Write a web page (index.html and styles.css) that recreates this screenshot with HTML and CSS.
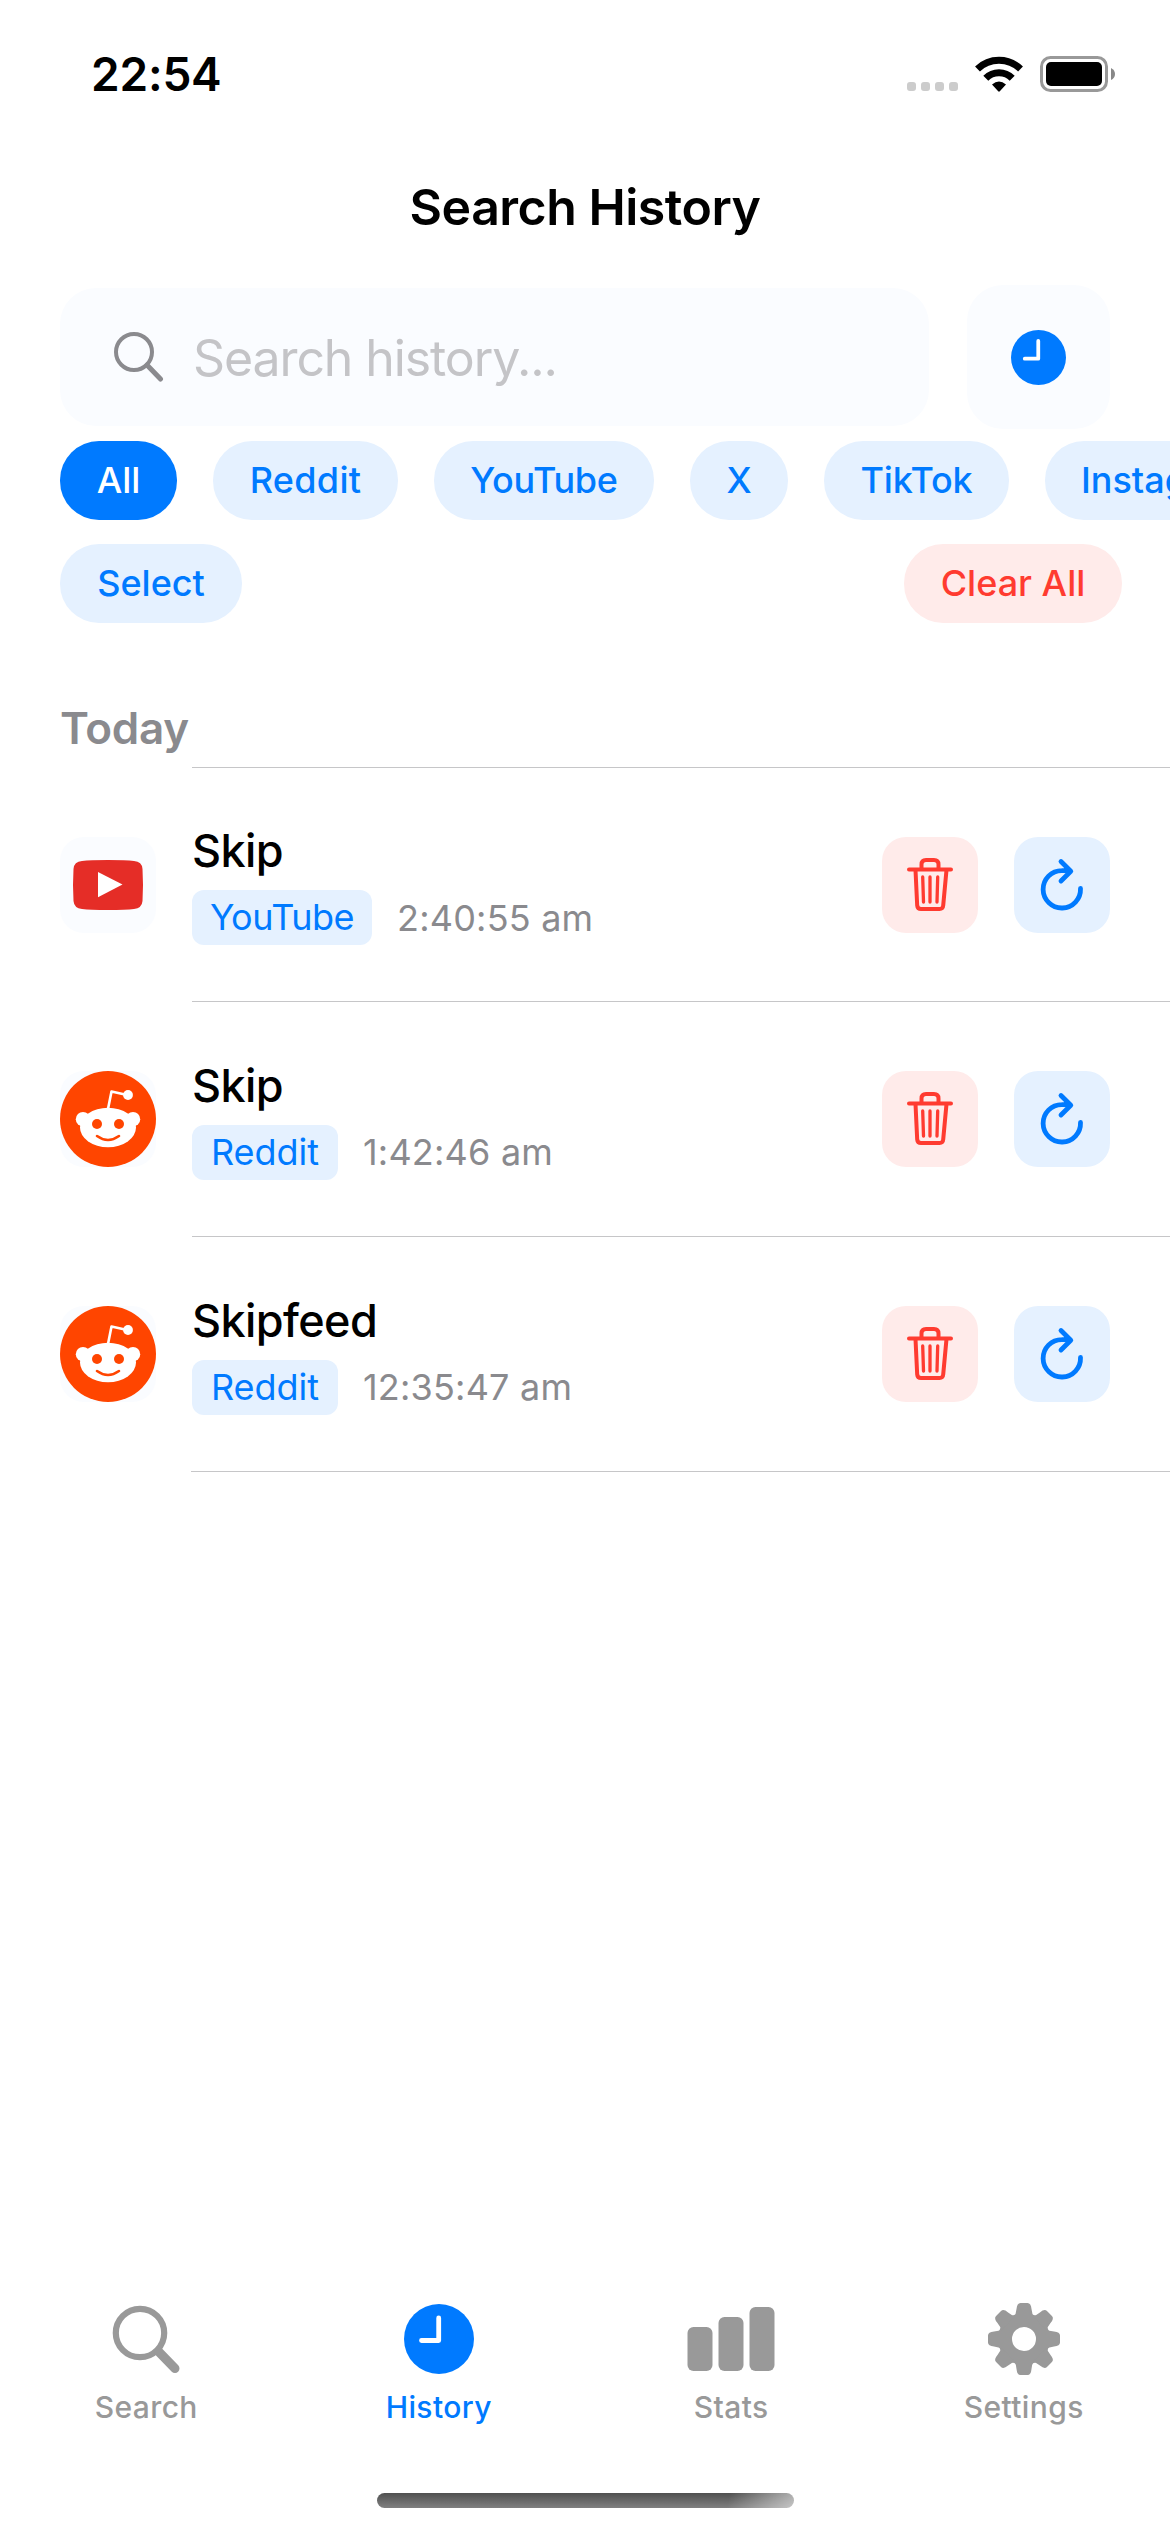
FILE: index.html
```html
<!DOCTYPE html>
<html lang="en">
<head>
<meta charset="utf-8">
<title>Search History</title>
<link rel="stylesheet" href="styles.css">
</head>
<body>
<svg class="defs" aria-hidden="true">
  <symbol id="trash" viewBox="0 0 96 96">
    <g fill="none" stroke="currentColor" stroke-linecap="round" stroke-linejoin="round">
      <path stroke-width="4" d="M27 32.400H69M39.500 32V27.500Q39.500 23 44 23H52Q56.500 23 56.500 27.500V32M33.500 33L35.200 68.500Q35.500 72 39 72H57.500Q61 72 61.200 68.500L64.500 33"/>
      <path stroke-width="3.300" d="M40.700 40L41.500 65M48 40V65M55.700 40L55 65"/>
    </g>
  </symbol>
  <symbol id="again" viewBox="0 0 96 96">
    <path fill="none" stroke="currentColor" stroke-width="4.800" stroke-linecap="round" stroke-linejoin="round" d="M66.500 51.500A18.700 18.700 0 1 1 47.800 33.600Q52 33.300 56.500 34.300M47 24.500L56.800 34.300L47 44"/>
  </symbol>
  <symbol id="clock" viewBox="0 0 70 70">
    <circle cx="35" cy="35" r="35" fill="currentColor"/>
    <path d="M34.700 14V36.500H17.500" fill="none" stroke="#fff" stroke-width="4.800" stroke-linecap="round" stroke-linejoin="round"/>
  </symbol>
  <symbol id="reddit" viewBox="0 0 96 96">
    <circle cx="48" cy="48" r="48" fill="#ff4500"/>
    <g fill="#fff">
      <ellipse cx="48" cy="56.500" rx="28" ry="19.700"/>
      <circle cx="23" cy="48.200" r="7.200"/><circle cx="73" cy="48.200" r="7.200"/>
      <circle cx="68" cy="24" r="4.900"/>
    </g>
    <path d="M48 38L51.500 20.500L66 23.700" fill="none" stroke="#fff" stroke-width="2.600" stroke-linejoin="round"/>
    <circle cx="37" cy="53" r="5" fill="#ff4500"/><circle cx="59" cy="53" r="5" fill="#ff4500"/>
    <path d="M37 65Q48 73 59 65" fill="none" stroke="#ff4500" stroke-width="2.600" stroke-linecap="round"/>
  </symbol>
</svg>

<div class="status">
  <span class="time">22:54</span>
  <span class="signals">
    <svg class="dots" viewBox="0 0 51 9" fill="#ccc"><rect width="9" height="9" rx="3"/><rect x="14" width="9" height="9" rx="3"/><rect x="28" width="9" height="9" rx="3"/><rect x="42" width="9" height="9" rx="3"/></svg>
    <svg class="wifi" viewBox="0 0 48 36"><g fill="none" stroke="#000"><path stroke-width="7" d="M2.500 12.900A31 31 0 0 1 45.500 12.900"/><path stroke-width="7" d="M10.800 22.300A18.500 18.500 0 0 1 37.200 22.300"/></g><path d="M17 28.500Q24 22.500 31 28.500L24.800 35.300Q24 36.200 23.200 35.300Z"/></svg>
    <svg class="battery" viewBox="0 0 76 36"><rect x="1.500" y="1.500" width="65" height="33" rx="9" fill="none" stroke="#999" stroke-width="3"/><rect x="6" y="6" width="56" height="24" rx="5"/><path d="M71 12Q75 14 75 18T71 24Z" fill="#888"/></svg>
  </span>
</div>

<h1 class="title">Search History</h1>

<div class="search-row">
  <div class="search-box">
    <svg class="lens" viewBox="0 0 50 50" fill="none" stroke="currentColor" stroke-linecap="round"><circle cx="20" cy="20" r="18" stroke-width="4"/><path d="M33 33L46.500 47" stroke-width="5"/></svg>
    <span>Search history...</span>
  </div>
  <div class="recent"><svg viewBox="0 0 70 70"><use href="#clock"/></svg></div>
</div>

<div class="chips">
  <span class="chip all active">All</span><span class="chip reddit">Reddit</span><span class="chip youtube">YouTube</span><span class="chip x">X</span><span class="chip tiktok">TikTok</span><span class="chip instagram">Instagram</span>
</div>
<div class="actions"><span class="chip select">Select</span><span class="chip clear">Clear All</span></div>

<h2 class="day"><span>Today</span></h2>

<div class="list">
  <div class="item">
    <div class="logo"><svg viewBox="0 0 96 96"><path d="M22 24Q30 23 48 23T74 24Q82 24.500 82.500 32Q83.500 48 82.500 64Q82 71 74 72Q66 73 48 73T22 72Q14 71 13.500 64Q12.500 48 13.500 32Q14 24.500 22 24Z" fill="#e52d27"/><path d="M38 35L62.500 47.500L38 60.300Z" fill="#fff"/></svg></div>
    <div class="body"><div class="name"><span>Skip</span></div><div class="meta"><span class="tag youtube">YouTube</span><span class="when">2:40:55 am</span></div></div>
    <div class="btn del"><svg viewBox="0 0 96 96"><use href="#trash"/></svg></div><div class="btn redo"><svg viewBox="0 0 96 96"><use href="#again"/></svg></div>
  </div>
  <div class="item">
    <div class="logo"><svg viewBox="0 0 96 96"><use href="#reddit"/></svg></div>
    <div class="body"><div class="name"><span>Skip</span></div><div class="meta"><span class="tag reddit">Reddit</span><span class="when">1:42:46 am</span></div></div>
    <div class="btn del"><svg viewBox="0 0 96 96"><use href="#trash"/></svg></div><div class="btn redo"><svg viewBox="0 0 96 96"><use href="#again"/></svg></div>
  </div>
  <div class="item">
    <div class="logo"><svg viewBox="0 0 96 96"><use href="#reddit"/></svg></div>
    <div class="body"><div class="name"><span>Skipfeed</span></div><div class="meta"><span class="tag reddit">Reddit</span><span class="when">12:35:47 am</span></div></div>
    <div class="btn del"><svg viewBox="0 0 96 96"><use href="#trash"/></svg></div><div class="btn redo"><svg viewBox="0 0 96 96"><use href="#again"/></svg></div>
  </div>
</div>

<nav class="tabs">
  <div class="tab"><svg viewBox="0 0 90 76" fill="none" stroke="currentColor" stroke-linecap="round"><circle cx="39" cy="32" r="24.200" stroke-width="6.200"/><path d="M58 51L74 67.500" stroke-width="9"/></svg><span>Search</span></div>
  <div class="tab on"><svg viewBox="-10 -3 90 76"><use href="#clock" width="70" height="70"/></svg><span>History</span></div>
  <div class="tab"><svg viewBox="0 0 90 76" fill="currentColor"><rect x="1.500" y="26" width="25" height="44" rx="6"/><rect x="32.500" y="16" width="25" height="54" rx="6"/><rect x="63.500" y="6" width="25" height="64" rx="6"/></svg><span>Stats</span></div>
  <div class="tab"><svg viewBox="-45 -38 90 76" fill="currentColor"><defs><path id="tooth" d="M-10 -22Q-8 -25 -7.500 -30Q-7 -36 -3.500 -36H3.500Q7 -36 7.500 -30Q8 -25 10 -22Z"/></defs><path fill-rule="evenodd" d="M0 -26A26 26 0 1 0 0 26A26 26 0 1 0 0 -26ZM0 -12A12 12 0 1 1 0 12A12 12 0 1 1 0 -12Z"/><use href="#tooth"/><use href="#tooth" transform="rotate(45)"/><use href="#tooth" transform="rotate(90)"/><use href="#tooth" transform="rotate(135)"/><use href="#tooth" transform="rotate(180)"/><use href="#tooth" transform="rotate(225)"/><use href="#tooth" transform="rotate(270)"/><use href="#tooth" transform="rotate(315)"/></svg><span>Settings</span></div>
</nav>
<div class="home"></div>
</body>
</html>
```
FILE: styles.css
```css
* { box-sizing: border-box; }
body {
  margin: 0;
  width: 1170px;
  height: 2532px;
  overflow: hidden;
  background: #fff;
  color: #000;
  font-family: Inter, "Liberation Sans", sans-serif;
  display: flex;
  flex-direction: column;
}
svg { display: block; }
.defs { display: none; }
.status {
  height: 148px;
  flex: none;
  padding: 0 54px 0 91px;
  display: flex;
  justify-content: space-between;
  align-items: center;
}
.time { font-size: 46px; font-weight: 600; letter-spacing: -0.2px; line-height: 56px; }
.signals { display: flex; align-items: flex-end; height: 36px; }
.dots { width: 51px; height: 9px; margin: 0 17px 1px 0; }
.wifi { width: 48px; height: 36px; margin-right: 17px; }
.battery { width: 76px; height: 36px; }
.title {
  margin: 0;
  height: 137px;
  padding-top: 27px;
  text-align: center;
  font-size: 50px;
  font-weight: 600;
  line-height: 64px;
  letter-spacing: -0.5px;
}
.search-row { display: flex; align-items: center; gap: 38px; padding: 0 60px; height: 144px; }
.search-box {
  width: 869px;
  height: 138px;
  border-radius: 36px;
  background: #fafcff;
  display: flex;
  align-items: center;
  gap: 29px;
  padding-left: 54px;
  font-size: 50px;
  letter-spacing: -1.1px;
  color: #c4c4c7;
}
.search-box span { position: relative; top: 1px; }
.lens { width: 50px; height: 50px; color: #8a8a8e; }
.recent {
  width: 143px;
  height: 144px;
  border-radius: 36px;
  background: #fafcff;
  color: #007aff;
  display: flex;
  align-items: center;
  justify-content: center;
}
.recent svg { width: 55px; height: 55px; }
.chips { display: flex; gap: 36px; padding-left: 60px; margin-top: 12px; white-space: nowrap; overflow: hidden; }
.chip {
  flex: none;
  height: 79px;
  border-radius: 39px;
  background: #e5f1ff;
  color: #007aff;
  font-size: 36px;
  font-weight: 500;
  line-height: 79px;
  text-align: center;
}
.chip.active { background: #007aff; color: #fff; }
.chip.all { width: 117px; }
.chip.reddit { width: 185px; letter-spacing: 0.3px; }
.chip.youtube { width: 220px; letter-spacing: -0.3px; }
.chip.x { width: 98px; }
.chip.tiktok { width: 185px; letter-spacing: -0.2px; }
.chip.instagram { padding: 0 36px; }
.chip.select { width: 182px; }
.chip.clear { width: 218px; background: #ffebea; color: #ff3b30; }
.actions { display: flex; justify-content: space-between; padding: 0 48px 0 60px; margin-top: 24px; }
.day {
  margin: 0 0 0 60px;
  height: 144px;
  padding-top: 78px;
  font-size: 44px;
  font-weight: 600;
  line-height: 54px;
  letter-spacing: -0.3px;
  color: #8a8a8e;
}
.item {
  height: 235px;
  padding: 0 60px;
  display: flex;
  align-items: center;
  background: linear-gradient(#c6c6c8, #c6c6c8) 192px 0 / 978px 1px no-repeat;
}
.item:first-child { height: 234px; padding-top: 1px; }
.item:nth-child(n+2) { padding-top: 1px; }
.item:last-child {
  height: 236px;
  border-bottom: 1px solid transparent;
  border-image: linear-gradient(90deg, transparent 192px, #c6c6c8 192px) 1;
}
.logo { width: 96px; height: 96px; border-radius: 24px; background: #fafcff; margin-right: 36px; }
.body { flex: 1; }
.name { font-size: 45px; font-weight: 500; line-height: 54px; letter-spacing: -0.6px; margin-bottom: 12px; }
.meta { display: flex; align-items: center; gap: 25px; height: 55px; }
.tag {
  height: 55px;
  border-radius: 12px;
  background: #e5f1ff;
  color: #007aff;
  font-size: 36px;
  line-height: 55px;
  text-align: center;
}
.tag.youtube { width: 180px; letter-spacing: -0.5px; }
.tag.reddit { width: 146px; }
.when { font-size: 36px; letter-spacing: 0.2px; color: #8a8a8e; }
.btn { width: 96px; height: 96px; border-radius: 24px; }
.del { background: #ffebea; color: #ff3b30; margin-right: 36px; }
.redo { background: #e5f1ff; color: #007aff; }
.tabs {
  margin-top: auto;
  display: grid;
  grid-template-columns: repeat(4, 1fr);
  height: 192px;
}
.tab { display: flex; flex-direction: column; align-items: center; color: #999; font-size: 30px; font-weight: 500; line-height: 36px; letter-spacing: 0.4px; }
.tab svg { width: 90px; height: 76px; margin-bottom: 12px; }
.tab.on { color: #007aff; }
.home {
  width: 417px;
  height: 15px;
  border-radius: 8px;
  margin: 0 auto 24px;
  background: linear-gradient(100deg, rgba(255,255,255,0) 84%, rgba(255,255,255,.55) 100%), linear-gradient(#505050, #808080);
}
```
